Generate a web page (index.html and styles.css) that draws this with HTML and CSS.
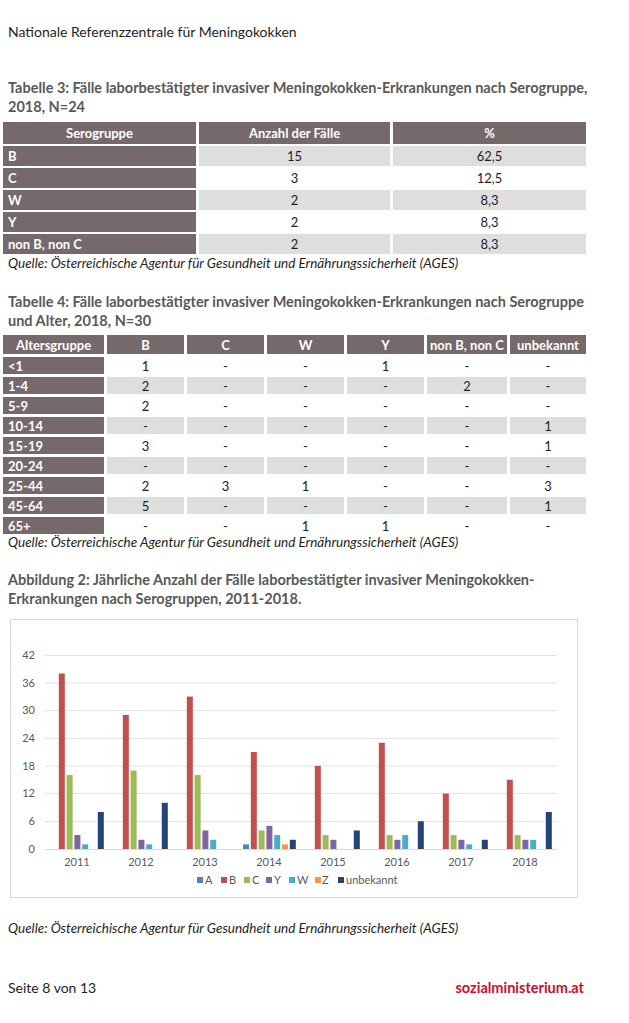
FILE: index.html
```html
<!DOCTYPE html>
<html lang="de">
<head>
<meta charset="utf-8">
<title>Nationale Referenzzentrale für Meningokokken</title>
<link rel="stylesheet" href="styles.css">
</head>
<body>
<div class="page">
  <p class="doc-head">Nationale Referenzzentrale für Meningokokken</p>

  <h2 class="caption cap-t3">Tabelle 3: Fälle laborbestätigter invasiver Meningokokken-Erkrankungen nach Serogruppe, 2018, N=24</h2>
  <table class="data t3">
    <colgroup><col class="c1"><col class="c2"><col class="c3"></colgroup>
    <thead>
      <tr><th>Serogruppe</th><th>Anzahl der Fälle</th><th>%</th></tr>
    </thead>
    <tbody>
      <tr class="alt"><th>B</th><td>15</td><td>62,5</td></tr>
      <tr><th>C</th><td>3</td><td>12,5</td></tr>
      <tr class="alt"><th>W</th><td>2</td><td>8,3</td></tr>
      <tr><th>Y</th><td>2</td><td>8,3</td></tr>
      <tr class="alt"><th>non B, non C</th><td>2</td><td>8,3</td></tr>
    </tbody>
  </table>
  <p class="source src-t3">Quelle: Österreichische Agentur für Gesundheit und Ernährungssicherheit (AGES)</p>

  <h2 class="caption cap-t4">Tabelle 4: Fälle laborbestätigter invasiver Meningokokken-Erkrankungen nach Serogruppe und Alter, 2018, N=30</h2>
  <table class="data t4">
    <colgroup><col class="a1"><col class="a2"><col class="a3"><col class="a4"><col class="a5"><col class="a6"><col class="a7"></colgroup>
    <thead>
      <tr><th>Altersgruppe</th><th>B</th><th>C</th><th>W</th><th>Y</th><th>non B, non C</th><th>unbekannt</th></tr>
    </thead>
    <tbody>
      <tr><th>&lt;1</th><td>1</td><td>-</td><td>-</td><td>1</td><td>-</td><td>-</td></tr>
      <tr class="alt"><th>1-4</th><td>2</td><td>-</td><td>-</td><td>-</td><td>2</td><td>-</td></tr>
      <tr><th>5-9</th><td>2</td><td>-</td><td>-</td><td>-</td><td>-</td><td>-</td></tr>
      <tr class="alt"><th>10-14</th><td>-</td><td>-</td><td>-</td><td>-</td><td>-</td><td>1</td></tr>
      <tr><th>15-19</th><td>3</td><td>-</td><td>-</td><td>-</td><td>-</td><td>1</td></tr>
      <tr class="alt"><th>20-24</th><td>-</td><td>-</td><td>-</td><td>-</td><td>-</td><td>-</td></tr>
      <tr><th>25-44</th><td>2</td><td>3</td><td>1</td><td>-</td><td>-</td><td>3</td></tr>
      <tr class="alt"><th>45-64</th><td>5</td><td>-</td><td>-</td><td>-</td><td>-</td><td>1</td></tr>
      <tr><th>65+</th><td>-</td><td>-</td><td>1</td><td>1</td><td>-</td><td>-</td></tr>
    </tbody>
  </table>
  <p class="source src-t4">Quelle: Österreichische Agentur für Gesundheit und Ernährungssicherheit (AGES)</p>

  <h2 class="caption cap-fig">Abbildung 2: Jährliche Anzahl der Fälle laborbestätigter invasiver Meningokokken-Erkrankungen nach Serogruppen, 2011-2018.</h2>
  <figure class="chart">
    <svg class="chart-svg" width="566" height="277" viewBox="0 0 566 277" xmlns="http://www.w3.org/2000/svg">
      <g class="grid" stroke="#e3e3e3" stroke-width="1">
        <line x1="34" x2="546" y1="35.5" y2="35.5"/>
        <line x1="34" x2="546" y1="63" y2="63"/>
        <line x1="34" x2="546" y1="90.5" y2="90.5"/>
        <line x1="34" x2="546" y1="118.5" y2="118.5"/>
        <line x1="34" x2="546" y1="146" y2="146"/>
        <line x1="34" x2="546" y1="173.5" y2="173.5"/>
        <line x1="34" x2="546" y1="201.5" y2="201.5"/>
        <line x1="34" x2="546" y1="229.5" y2="229.5" stroke="#d9d9d9"/>
      </g>
      <g class="ylab" font-size="11" fill="#595959" text-anchor="end">
        <text x="24" y="39">42</text>
        <text x="24" y="67">36</text>
        <text x="24" y="94">30</text>
        <text x="24" y="122">24</text>
        <text x="24" y="150">18</text>
        <text x="24" y="177">12</text>
        <text x="24" y="205">6</text>
        <text x="24" y="233">0</text>
      </g>
      <g class="bars">
        <!-- 2011 -->
        <rect x="47.8" y="53.5" width="6" height="175.5" fill="#c0504d"/>
        <rect x="55.6" y="155.1" width="6" height="73.9" fill="#9bbb59"/>
        <rect x="63.4" y="215.1" width="6" height="13.9" fill="#8064a2"/>
        <rect x="71.2" y="224.4" width="6" height="4.6" fill="#4bacc6"/>
        <rect x="86.8" y="192" width="6" height="37" fill="#254373"/>
        <!-- 2012 -->
        <rect x="111.8" y="95" width="6" height="134" fill="#c0504d"/>
        <rect x="119.6" y="150.5" width="6" height="78.5" fill="#9bbb59"/>
        <rect x="127.4" y="219.8" width="6" height="9.2" fill="#8064a2"/>
        <rect x="135.2" y="224.4" width="6" height="4.6" fill="#4bacc6"/>
        <rect x="150.8" y="182.8" width="6" height="46.2" fill="#254373"/>
        <!-- 2013 -->
        <rect x="175.8" y="76.6" width="6" height="152.4" fill="#c0504d"/>
        <rect x="183.6" y="155.1" width="6" height="73.9" fill="#9bbb59"/>
        <rect x="191.4" y="210.5" width="6" height="18.5" fill="#8064a2"/>
        <rect x="199.2" y="219.8" width="6" height="9.2" fill="#4bacc6"/>
        <!-- 2014 -->
        <rect x="232" y="224.4" width="6" height="4.6" fill="#4f81bd"/>
        <rect x="239.8" y="132" width="6" height="97" fill="#c0504d"/>
        <rect x="247.6" y="210.5" width="6" height="18.5" fill="#9bbb59"/>
        <rect x="255.4" y="205.9" width="6" height="23.1" fill="#8064a2"/>
        <rect x="263.2" y="215.1" width="6" height="13.9" fill="#4bacc6"/>
        <rect x="271" y="224.4" width="6" height="4.6" fill="#f79646"/>
        <rect x="278.8" y="219.8" width="6" height="9.2" fill="#254373"/>
        <!-- 2015 -->
        <rect x="303.8" y="145.9" width="6" height="83.1" fill="#c0504d"/>
        <rect x="311.6" y="215.1" width="6" height="13.9" fill="#9bbb59"/>
        <rect x="319.4" y="219.8" width="6" height="9.2" fill="#8064a2"/>
        <rect x="342.8" y="210.5" width="6" height="18.5" fill="#254373"/>
        <!-- 2016 -->
        <rect x="367.8" y="122.8" width="6" height="106.2" fill="#c0504d"/>
        <rect x="375.6" y="215.1" width="6" height="13.9" fill="#9bbb59"/>
        <rect x="383.4" y="219.8" width="6" height="9.2" fill="#8064a2"/>
        <rect x="391.2" y="215.1" width="6" height="13.9" fill="#4bacc6"/>
        <rect x="406.8" y="201.3" width="6" height="27.7" fill="#254373"/>
        <!-- 2017 -->
        <rect x="431.8" y="173.6" width="6" height="55.4" fill="#c0504d"/>
        <rect x="439.6" y="215.1" width="6" height="13.9" fill="#9bbb59"/>
        <rect x="447.4" y="219.8" width="6" height="9.2" fill="#8064a2"/>
        <rect x="455.2" y="224.4" width="6" height="4.6" fill="#4bacc6"/>
        <rect x="470.8" y="219.8" width="6" height="9.2" fill="#254373"/>
        <!-- 2018 -->
        <rect x="495.8" y="159.7" width="6" height="69.3" fill="#c0504d"/>
        <rect x="503.6" y="215.1" width="6" height="13.9" fill="#9bbb59"/>
        <rect x="511.4" y="219.8" width="6" height="9.2" fill="#8064a2"/>
        <rect x="519.2" y="219.8" width="6" height="9.2" fill="#4bacc6"/>
        <rect x="534.8" y="192" width="6" height="37" fill="#254373"/>
      </g>
      <g class="xlab" font-size="11" fill="#595959" text-anchor="middle">
        <text x="66" y="246">2011</text>
        <text x="130" y="246">2012</text>
        <text x="194" y="246">2013</text>
        <text x="258" y="246">2014</text>
        <text x="322" y="246">2015</text>
        <text x="386" y="246">2016</text>
        <text x="450" y="246">2017</text>
        <text x="514" y="246">2018</text>
      </g>
      <g class="legend" font-size="11" fill="#595959">
        <rect x="186" y="257" width="6" height="6" fill="#4f81bd"/><text x="194" y="264">A</text>
        <rect x="210" y="257" width="6" height="6" fill="#c0504d"/><text x="218" y="264">B</text>
        <rect x="233" y="257" width="6" height="6" fill="#9bbb59"/><text x="241" y="264">C</text>
        <rect x="255" y="257" width="6" height="6" fill="#8064a2"/><text x="263" y="264">Y</text>
        <rect x="278" y="257" width="6" height="6" fill="#4bacc6"/><text x="286" y="264">W</text>
        <rect x="304" y="257" width="6" height="6" fill="#f79646"/><text x="311" y="264">Z</text>
        <rect x="327" y="257" width="6" height="6" fill="#254373"/><text x="335" y="264">unbekannt</text>
      </g>
    </svg>
  </figure>
  <p class="source src-fig">Quelle: Österreichische Agentur für Gesundheit und Ernährungssicherheit (AGES)</p>

  <footer class="foot">
    <span class="pageno">Seite 8 von 13</span>
    <span class="brand">sozialministerium.at</span>
  </footer>
</div>
</body>
</html>
```

FILE: styles.css
```css
html, body {
  margin: 0;
  padding: 0;
  background: #ffffff;
}

body {
  font-family: Lato, "Open Sans", "Liberation Sans", sans-serif;
  color: #1e1e1e;
}

.page {
  width: 629px;
  display: flex;
  flex-direction: column;
}

.doc-head {
  margin: 22px 0 0 8px;
  font-size: 14px;
  line-height: 20px;
}

.caption {
  margin: 0 0 0 8px;
  font-size: 14.5px;
  line-height: 19px;
  font-weight: 700;
  color: #595959;
  width: 590px;
}

.cap-t3 { margin-top: 36px; }
.cap-t4 { margin-top: 20px; }
.cap-fig { margin-top: 19px; }

.data {
  border-collapse: separate;
  table-layout: fixed;
  width: 589px;
  font-size: 13px;
  color: #1e1e1e;
}

.data th,
.data td {
  padding: 0;
  text-align: center;
  vertical-align: middle;
  white-space: nowrap;
}

.data thead th {
  background: #75696b;
  color: #ffffff;
  font-weight: 700;
}

.data tbody th {
  background: #75696b;
  color: #ffffff;
  font-weight: 700;
  text-align: left;
  padding-left: 5px;
}

.data tbody tr.alt td {
  background: #dedede;
}

.t3 {
  border-spacing: 3px 2px;
  margin-top: 4px;
}
.t3 thead th { height: 22px; }
.t3 tbody th,
.t3 tbody td { height: 20px; }

.c1 { width: 193px; }
.c2 { width: 191px; }
.c3 { width: 193px; }

.t4 {
  border-spacing: 3px 3px;
  margin-top: 2px;
}
.t4 thead th { height: 19px; }
.t4 tbody th,
.t4 tbody td { height: 17px; }

.a1 { width: 101px; }
.a2 { width: 77px; }
.a3 { width: 77px; }
.a4 { width: 77px; }
.a5 { width: 77px; }
.a6 { width: 80px; }
.a7 { width: 76px; }

.source {
  margin: 0 0 0 8px;
  font-size: 13.5px;
  line-height: 17px;
  font-style: italic;
  color: #1e1e1e;
}
.src-t3 { margin-top: -1px; }
.src-t4 { margin-top: -3px; }
.src-fig { margin-top: 22px; }

.chart {
  margin: 11px 0 0 10px;
  width: 566px;
  height: 277px;
  border: 1px solid #dadada;
}

.chart-svg {
  display: block;
  font-family: Lato, "Open Sans", "Liberation Sans", sans-serif;
}

.foot {
  margin: 41px 0 0 8px;
  width: 576px;
  display: flex;
  justify-content: space-between;
  align-items: baseline;
  font-size: 14px;
  line-height: 20px;
}

.pageno {
  color: #1e1e1e;
}

.brand {
  color: #c8102e;
  font-weight: 700;
  font-size: 14.5px;
}
```
